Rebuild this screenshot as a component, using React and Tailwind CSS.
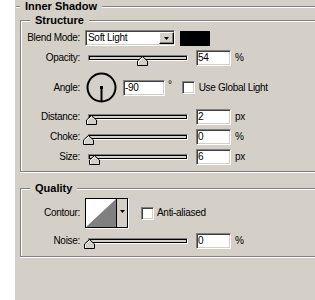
import React from 'react';

const sunken =
  "border border-t-[#808080] border-l-[#808080] border-b-white border-r-white shadow-[inset_1px_1px_0_#404040,inset_-1px_-1px_0_#d4d0c8]";
const raised =
  "border border-t-white border-l-white border-b-black border-r-black shadow-[inset_-1px_-1px_0_#808080]";

function Arrow() {
  return (
    <svg width="5" height="3" viewBox="0 0 5 3">
      <polygon points="0,0 5,0 2.5,3" fill="#000" />
    </svg>
  );
}

function Row({ label, className = "", children }) {
  return (
    <div className={"flex items-center " + className}>
      <div className="w-[64px] pr-[5px] text-right whitespace-nowrap">{label}</div>
      {children}
    </div>
  );
}

function Slider({ thumb }) {
  return (
    <div className="relative w-[106px] h-[16px] flex items-center pl-[3px]">
      <div className="w-[100px] h-[6px] border border-t-[#808080] border-l-[#808080] border-b-white border-r-white bg-[#d4d0c8] shadow-[inset_1px_1px_0_#000,inset_-1px_-1px_0_#000]" />
      <svg
        className="absolute top-[6px]"
        style={{ left: thumb }}
        width="11"
        height="10"
        viewBox="0 0 11 10"
      >
        <polygon points="0.5,9.5 0.5,5 5.5,0.5 10.5,5 10.5,9.5" fill="#d4d0c8" stroke="#000" />
        <polyline points="1.5,9 1.5,5.4 5.5,1.8" fill="none" stroke="#fff" />
      </svg>
    </div>
  );
}

function Field({ value, w = "w-[35px]" }) {
  return (
    <div className={`${sunken} ${w} h-[16px] bg-white flex items-center pl-[1px]`}>
      {value}
    </div>
  );
}

function Check() {
  return <div className={`${sunken} w-[13px] h-[13px] bg-white shrink-0`} />;
}

function ValueRow({ label, thumb, value, unit, className }) {
  return (
    <Row label={label} className={"h-[16px] " + className}>
      <Slider thumb={thumb} />
      <div className="ml-[5px]">
        <Field value={value} />
      </div>
      <span className="ml-[4px]">{unit}</span>
    </Row>
  );
}

export default function App() {
  return (
    <div className="w-[315px] h-[300px] flex overflow-hidden font-['Liberation_Sans',Arial,sans-serif] text-[10px] tracking-[-0.3px] text-black leading-none">
      <div className="w-[15px] shrink-0 bg-white" />
      <div className="flex-1 bg-[#d4d0c8] overflow-hidden">
        <fieldset className="w-[330px] ml-[1px] border-t border-[#808080] shadow-[inset_0_1px_0_#fff]">
          <legend className="ml-[4px] px-[5px] bg-[#d4d0c8] font-bold text-[11px] leading-[13px] tracking-normal">
            Inner Shadow
          </legend>

          <fieldset className="ml-[4px] mt-[1px] pb-[6px] border-l border-t border-b border-[#808080] shadow-[inset_1px_1px_0_#fff,0_1px_0_#fff]">
            <legend className="ml-[9px] px-[5px] bg-[#d4d0c8] font-bold text-[11px] leading-[13px] tracking-normal">
              Structure
            </legend>

            <Row label="Blend Mode:" className="mt-[3px] h-[16px]">
              <div className={`${sunken} w-[90px] h-[16px] bg-white flex items-center`}>
                <span className="flex-1 pl-[2px]">Soft Light</span>
                <div className={`${raised} w-[15px] h-[12px] bg-[#d4d0c8] flex items-center justify-center`}>
                  <Arrow />
                </div>
              </div>
              <div className="ml-[5px] w-[30px] h-[15px] bg-black" />
            </Row>

            <ValueRow label="Opacity:" thumb={52} value="54" unit="%" className="mt-[4px]" />

            <Row label="Angle:" className="mt-[6px] h-[31px]">
              <svg className="ml-[1px]" width="31" height="31" viewBox="0 0 31 31">
                <circle cx="15.5" cy="15.5" r="14" fill="none" stroke="#000" strokeWidth="2" />
                <rect x="14" y="14" width="3" height="3" fill="#000" />
                <line x1="15.5" y1="15.5" x2="15.5" y2="29" stroke="#000" strokeWidth="2" />
              </svg>
              <div className="ml-[6px]">
                <Field value="-90" w="w-[42px]" />
              </div>
              <span className="ml-[3px] self-start mt-[8px]">°</span>
              <div className="ml-[10px]">
                <Check />
              </div>
              <span className="ml-[4px] whitespace-nowrap">Use Global Light</span>
            </Row>

            <ValueRow label="Distance:" thumb={1} value="2" unit="px" className="mt-[6px]" />
            <ValueRow label="Choke:" thumb={-2} value="0" unit="%" className="mt-[4px]" />
            <ValueRow label="Size:" thumb={4} value="6" unit="px" className="mt-[4px]" />
          </fieldset>

          <fieldset className="ml-[4px] mt-[10px] pb-[7px] border-l border-t border-b border-[#808080] shadow-[inset_1px_1px_0_#fff,0_1px_0_#fff]">
            <legend className="ml-[9px] px-[5px] bg-[#d4d0c8] font-bold text-[11px] leading-[13px] tracking-normal">
              Quality
            </legend>

            <Row label="Contour:" className="mt-[3px] h-[30px]">
              <div className="w-[43px] h-[30px] border border-black bg-white flex shadow-[1px_1px_0_#fff]">
                <svg width="30" height="28" viewBox="0 0 30 28">
                  <polygon points="0,28 30,0 30,28" fill="#808080" />
                </svg>
                <div className="flex-1 border-l border-black bg-[#d4d0c8] flex items-center justify-center pb-[4px]">
                  <Arrow />
                </div>
              </div>
              <div className="ml-[13px]">
                <Check />
              </div>
              <span className="ml-[3px] whitespace-nowrap">Anti-aliased</span>
            </Row>

            <ValueRow label="Noise:" thumb={-1} value="0" unit="%" className="mt-[5px]" />
          </fieldset>
        </fieldset>
      </div>
    </div>
  );
}
